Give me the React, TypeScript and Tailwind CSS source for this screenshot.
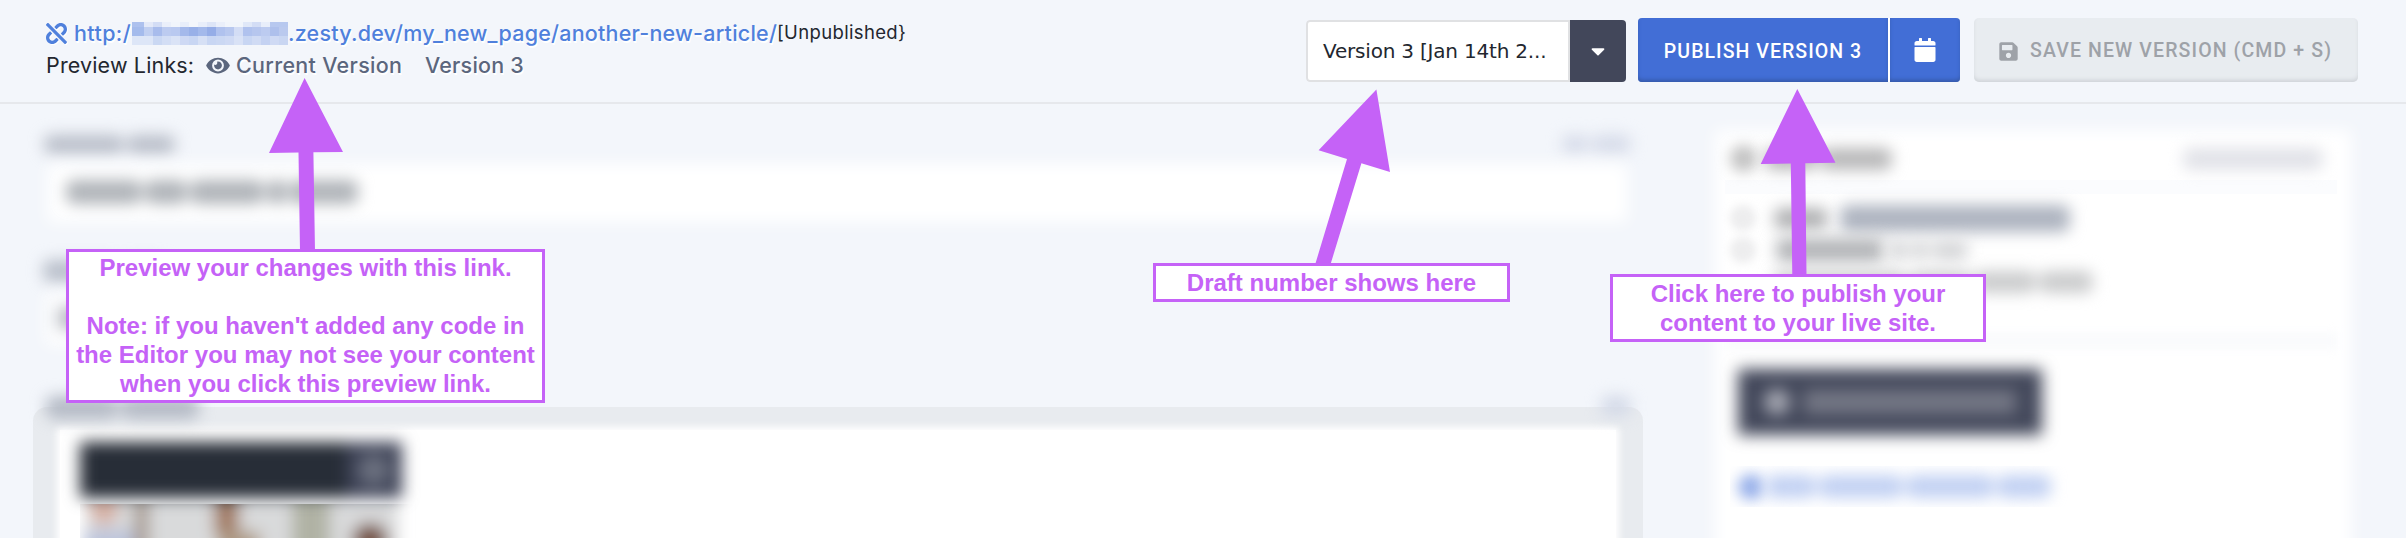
import { FaUnlink, FaEye, FaCalendar, FaSave, FaCaretDown } from "react-icons/fa";

const MOSAIC = [
  "#adc1ee", "#e3e9f8", "#d3ddf5", "#eaeffa", "#f1f5fb", "#e8eefa", "#f3f6fb", "#e8eefa", "#dde5f7", "#eaeffa", "#f1f5fb", "#f1f5fb", "#e0e8f8", "#d3ddf5", "#e8eefa", "#b7c8ef", "#b7c8ef",
  "#a4bbec", "#c0cff1", "#a8bcec", "#bccbf0", "#b9c9f0", "#a4b9eb", "#98b0e8", "#a3b9eb", "#95ade7", "#b0c2ee", "#b8c8ef", "#d3ddf5", "#b0c2ee", "#b6c6ee", "#bccbf0", "#aec0ec", "#bac9ee",
  "#dde6f7", "#dde6f7", "#cad8f3", "#d3def5", "#dae3f6", "#ced9f4", "#c8d6f3", "#d6e0f5", "#c8d6f3", "#cbd8f3", "#cfdaf4", "#d9e2f6", "#c8d6f3", "#d0dbf4", "#c4d2f2", "#cfdaf4", "#c9d6f2",
];

function Words({ widths, className }: { widths: number[]; className: string }) {
  return (
    <div className="flex gap-[3px] blur-[7.5px]">
      {widths.map((w, i) => (
        <span key={i} className={`block rounded-[8px] ${className}`} style={{ width: w + 2 }} />
      ))}
    </div>
  );
}

function Header() {
  return (
    <header className="flex h-[104px] shrink-0 items-start justify-between border-b-2 border-[#e6e8ec] pl-[46px] pr-[48px] pt-[17px]">
      <div className="flex flex-col font-['Inter',sans-serif] text-[21.5px] text-[#23272f]">
        <div className="flex h-8 items-center whitespace-nowrap">
          <FaUnlink className="mr-[7px] size-[21px] shrink-0 text-[#4f80dc] drop-shadow-[1px_1px_0_#fff]" />
          <span className="w-[58px] font-medium tracking-[0.4px] text-[#4f80dc] [text-shadow:1px_2px_0_#fff]">http:/</span>
          <span className="grid h-[23px] w-[156px] grid-cols-[12px_repeat(16,9px)] grid-rows-[5px_9px_9px]">
            {MOSAIC.map((c, i) => (
              <span key={i} style={{ backgroundColor: c }} />
            ))}
          </span>
          <span className="w-[489px] font-medium tracking-[0.22px] text-[#4f80dc] [text-shadow:1px_2px_0_#fff]">
            .zesty.dev/my_new_page/another-new-article/
          </span>
          <span className="text-[18.5px] tracking-[0.35px]">[Unpublished&#125;</span>
        </div>
        <div className="flex h-8 items-center whitespace-nowrap">
          <span className="w-[160px] tracking-[0.15px]">Preview Links:</span>
          <span className="flex items-center font-medium text-[#5b667d] [text-shadow:1px_2px_0_#fff]">
            <FaEye className="mr-[6px] h-[21px] w-6" />
            <span className="w-[189px] tracking-[0.3px]">Current Version</span>
            <span className="tracking-[0.2px]">Version 3</span>
          </span>
        </div>
      </div>
      <div className="mt-px flex h-16 items-stretch font-['Roboto',sans-serif] text-[19.5px] font-medium">
        <div className="mr-3 mt-[2px] flex w-[320px] overflow-hidden rounded-[4px]">
          <div className="flex flex-1 items-center rounded-l-[4px] border-2 border-[#e0e1e3] bg-white pl-[15px] font-['DejaVu_Sans',sans-serif] text-[20px] font-normal tracking-[-0.2px] text-[#23272f]">
            Version 3 [Jan 14th 2...
          </div>
          <div className="flex w-14 items-center justify-center bg-[#42475a] text-white">
            <FaCaretDown className="size-[22px]" />
          </div>
        </div>
        <div className="flex w-[250px] items-center justify-center rounded-l-[4px] bg-[#426ed6] pt-[3px] tracking-[1.05px] text-white shadow-[inset_0_-3px_4px_-1px_#3558a6]">
          PUBLISH VERSION 3
        </div>
        <div className="ml-[2px] mr-[14px] flex w-[70px] items-center justify-center rounded-r-[4px] bg-[#426ed6] text-white shadow-[inset_0_-3px_4px_-1px_#3558a6,-2px_0_0_#fff]">
          <FaCalendar className="size-6" />
        </div>
        <div className="flex w-[384px] items-center rounded-[5px] bg-[#e8ecf0] pl-[24px] pt-[2px] tracking-[1.12px] text-[#9ea2a8] shadow-[inset_0_-3px_4px_-1px_#ced2d7]">
          <FaSave className="mr-[11px] size-[21px]" />
          <span className="whitespace-nowrap">SAVE NEW VERSION (CMD + S)</span>
        </div>
      </div>
    </header>
  );
}

function ContentFields() {
  return (
    <section className="w-[1643px] shrink-0 pt-[31px]">
      <div className="flex h-[29px] justify-between pl-[44px] pr-[12px]">
        <Words widths={[78, 46]} className="h-[19px] bg-[#b9bec9]" />
        <Words widths={[24, 38]} className="h-[18px] bg-[#d6dbe9]" />
      </div>
      <div className="ml-[48px] mr-[16px] h-[58px] bg-white blur-[8px]" />
      <div className="-mt-[42px] h-[80px] pl-[66px]">
        <Words widths={[74, 40, 72, 18, 66]} className="h-[24px] bg-[#b0b4b9]" />
      </div>
      <div className="h-[33px] pl-[43px]">
        <Words widths={[74, 44]} className="h-[22px] bg-[#b9bfca]" />
      </div>
      <div className="ml-[46px] h-[52px] w-[460px] bg-white pl-3 pt-[14px] blur-[8px]">
        <div className="h-[22px] w-[90px] bg-[#b4b8bf]" />
      </div>
      <div className="relative z-10 mt-[51px] flex h-[11px] justify-between pl-[46px] pr-[12px]">
        <Words widths={[70, 76]} className="h-[23px] bg-[#b4bac5]" />
        <Words widths={[28]} className="h-[20px] bg-[#d3d9e7]" />
      </div>
      <div className="ml-[33px] h-[160px] rounded-t-[14px] bg-[#e8ebef] px-[27px] pt-[23px]">
        <div className="h-[160px] bg-white pl-[20px] pt-[12px] shadow-[0_0_7px_3px_#fff]">
          <HeroImage />
        </div>
      </div>
    </section>
  );
}

function HeroImage() {
  return (
    <div className="h-[110px] w-[322px]">
      <div className="flex h-[56px] justify-end bg-[#272d37] blur-[8px]">
        <div className="flex w-[56px] items-center justify-center bg-[#3d4256]">
          <div className="size-8 rounded-full bg-[#6a6f7e]" />
        </div>
      </div>
      <div className="mt-[6px] h-[50px] w-[344px] overflow-hidden">
        <svg width="344" height="60" viewBox="0 0 344 60">
          <defs>
            <filter id="soft" x="-20%" y="-50%" width="140%" height="200%">
              <feGaussianBlur stdDeviation="8" />
            </filter>
          </defs>
          <g filter="url(#soft)">
            <rect x="6" y="-30" width="312" height="100" fill="#d9dadb" />
            <ellipse cx="24" cy="2" rx="14" ry="19" fill="#d8b0a3" />
            <rect x="4" y="26" width="52" height="40" fill="#bcc4dc" />
            <rect x="54" y="-20" width="15" height="80" fill="#a89b92" />
            <ellipse cx="147" cy="-13" rx="16" ry="14" fill="#29231f" />
            <rect x="134" y="-4" width="25" height="36" fill="#a27a62" />
            <rect x="138" y="28" width="42" height="34" fill="#ad9a84" />
            <rect x="212" y="-20" width="38" height="80" fill="#b0b2a4" />
            <ellipse cx="290" cy="36" rx="18" ry="17" fill="#75503f" />
          </g>
        </svg>
      </div>
    </div>
  );
}

function StatusPanel() {
  return (
    <aside className="ml-[70px] w-[640px] shrink-0 pt-[26px]">
      <div className="-mb-[460px] ml-[2px] h-[460px] w-[636px] bg-white blur-[8px]" />
      <div className="relative h-[460px] pl-[17px]">
        <div className="-ml-[5px] mr-[16px] h-[64px] border-b-[14px] border-[#fbfcfe] pl-[5px] pt-[15px]">
          <div className="flex items-center justify-between pr-[14px]">
            <div className="flex items-center gap-2">
              <div className="size-[27px] rounded-full bg-[#c2c2c2] blur-[7px]" />
              <Words widths={[50, 70]} className="h-[22px] bg-[#b8b8b9]" />
            </div>
            <Words widths={[138]} className="h-[22px] bg-[#e1e2e8]" />
          </div>
        </div>
        <div className="flex h-[32px] items-center gap-[18px] pt-[16px]">
          <div className="size-[26px] rounded-full bg-[#ededee] blur-[4px]" />
          <Words widths={[52]} className="h-[21px] bg-[#b0b1b3]" />
          <div className="-ml-[6px]">
            <Words widths={[228]} className="h-[27px] bg-[#aeb4c0]" />
          </div>
        </div>
        <div className="flex h-[32px] items-center gap-[20px] pt-[16px]">
          <div className="size-[26px] rounded-full bg-[#ededee] blur-[4px]" />
          <Words widths={[106]} className="h-[24px] bg-[#b4b6b9]" />
          <div className="-ml-[16px]">
            <Words widths={[18, 16, 34]} className="h-[20px] bg-[#d5d6d8]" />
          </div>
        </div>
        <div className="flex h-[74px] items-start pl-[44px] pt-[13px]">
          <Words widths={[130, 60, 60, 52]} className="h-[22px] bg-[#cbcccd]" />
        </div>
        <div className="-ml-[5px] mr-[16px] h-[18px] bg-[#fafbfd] blur-[4px]" />
        <div className="ml-[8px] mt-[19px] flex h-[66px] w-[304px] items-center gap-[14px] bg-[#42475a] pl-[26px] blur-[8px]">
          <div className="size-[26px] rounded-full bg-[#a8aab4]" />
          <div className="h-[24px] w-[212px] bg-[#747785]" />
        </div>
        <div className="mt-[31px] flex h-[41px] items-center overflow-hidden pl-[8px]">
          <div className="size-[26px] rounded-full bg-[#97b0ea] blur-[7px]" />
          <div className="ml-[2px]">
            <Words widths={[48, 82, 86, 52]} className="h-[23px] bg-[#c2d1f3]" />
          </div>
        </div>
      </div>
    </aside>
  );
}

const NOTE =
  "absolute flex flex-col items-center justify-center whitespace-nowrap border-[3px] border-[#c562f7] bg-white text-center font-['Liberation_Sans',sans-serif] text-[24px] font-bold leading-[29px] text-[#c562f7]";

function Annotations() {
  return (
    <>
      <svg className="absolute inset-0 z-20" width="2406" height="538" fill="#c562f7">
        <path d="M304.6 78 L343 152 L313.4 152.3 L315 251 L300 251 L298.5 152.6 L269 153 Z" />
        <path d="M1376.4 89.5 L1390 172 L1361.4 163.3 L1330.3 265 L1315 265 L1347 159 L1318.6 150.3 Z" />
        <path d="M1797.3 89 L1835.5 162.8 L1805.3 163.3 L1806.5 276 L1792.3 276 L1790.8 163.6 L1760.7 164 Z" />
      </svg>
      <div className={`${NOTE} left-[66px] top-[249px] z-30 h-[154px] w-[479px] pb-px`}>
        <p>Preview your changes with this link.</p>
        <p className="h-[29px]" />
        <p>Note: if you haven't added any code in</p>
        <p>the Editor you may not see your content</p>
        <p>when you click this preview link.</p>
      </div>
      <div className={`${NOTE} left-[1153px] top-[263px] z-30 h-[39px] w-[357px]`}>
        <p>Draft number shows here</p>
      </div>
      <div className={`${NOTE} left-[1610px] top-[274px] z-30 h-[68px] w-[376px]`}>
        <p>Click here to publish your</p>
        <p>content to your live site.</p>
      </div>
    </>
  );
}

export default function App() {
  return (
    <div className="relative flex h-[538px] w-[2406px] flex-col overflow-hidden bg-[#f3f6fb]">
      <Header />
      <main className="flex h-[434px] overflow-hidden">
        <ContentFields />
        <StatusPanel />
      </main>
      <Annotations />
    </div>
  );
}
